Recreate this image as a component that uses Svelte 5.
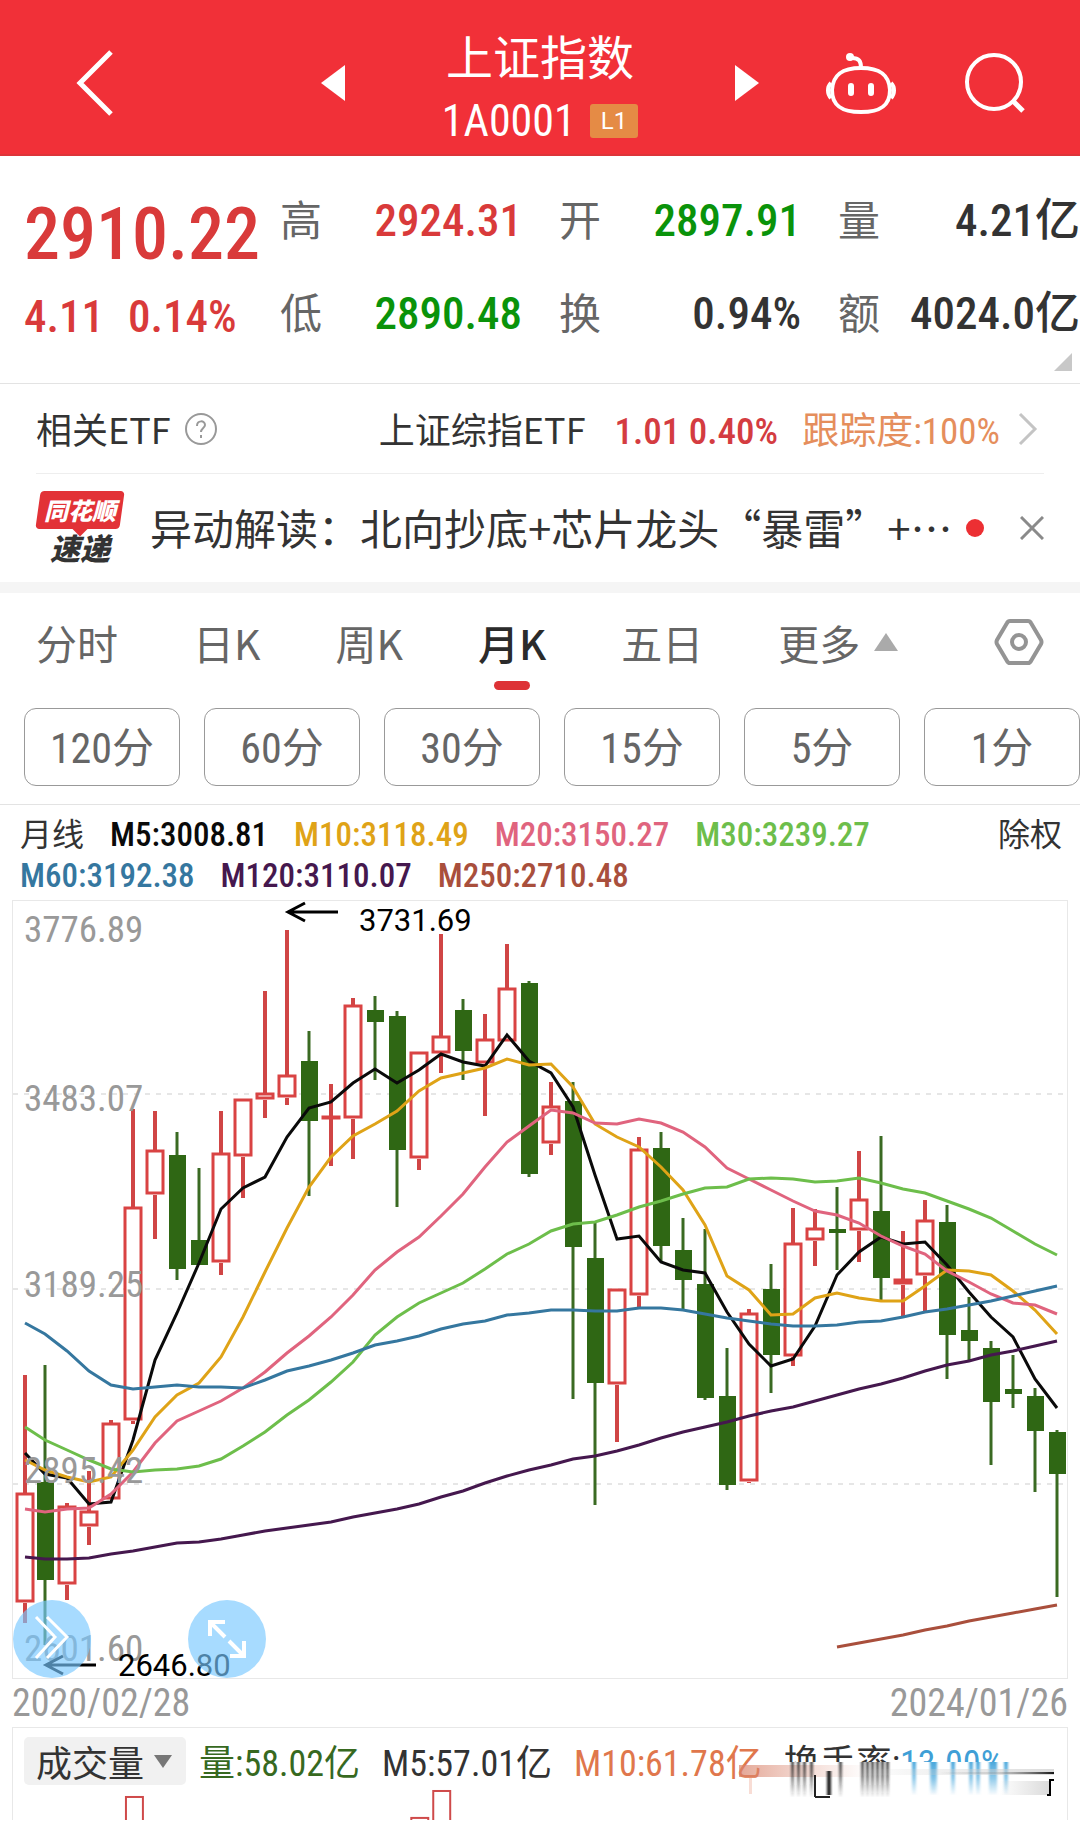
<script lang="ts">
    type Candle = [high: number, top: number, bottom: number, low: number, up: 0 | 1]

    const quotes = [
        { label: '高', value: '2924.31', tone: 'up' },
        { label: '开', value: '2897.91', tone: 'down' },
        { label: '量', value: '4.21亿', tone: '' },
        { label: '低', value: '2890.48', tone: 'down' },
        { label: '换', value: '0.94%', tone: '' },
        { label: '额', value: '4024.0亿', tone: '' }
    ]

    const tabs = ['分时', '日K', '周K', '月K', '五日']
    const periods = ['120分', '60分', '30分', '15分', '5分', '1分']
    let activeTab = $state('月K')
    let indicator = $state('成交量')

    const averages = [
        {
            name: 'M5',
            value: '3008.81',
            color: '#0a0a0a',
            start: 0,
            points: [
                1453, 1474, 1478, 1504, 1502, 1440, 1360, 1313, 1263, 1209, 1188, 1177, 1137, 1108,
                1102, 1083, 1069, 1083, 1070, 1054, 1062, 1066, 1035, 1061, 1073, 1107, 1175, 1239,
                1236, 1262, 1270, 1273, 1312, 1344, 1366, 1359, 1326, 1275, 1252, 1237, 1244, 1242,
                1265, 1292, 1317, 1337, 1379, 1408
            ]
        },
        {
            name: 'M10',
            value: '3118.49',
            color: '#dfa317',
            start: 0,
            points: [
                1460, 1470, 1477, 1482, 1477, 1450, 1417, 1395, 1383, 1357, 1317, 1272, 1228, 1187,
                1157, 1136, 1124, 1111, 1091, 1078, 1073, 1068, 1059, 1065, 1064, 1087, 1124, 1137,
                1147, 1167, 1190, 1225, 1276, 1290, 1315, 1314, 1298, 1293, 1298, 1301, 1301, 1286,
                1270, 1271, 1275, 1291, 1310, 1334
            ]
        },
        {
            name: 'M20',
            value: '3150.27',
            color: '#e0647e',
            start: 0,
            points: [
                1509, 1512, 1509, 1508, 1494, 1472, 1443, 1421, 1411, 1401, 1388, 1372, 1353, 1336,
                1317, 1295, 1270, 1252, 1237, 1216, 1194, 1167, 1142, 1126, 1110, 1113, 1123, 1124,
                1119, 1123, 1132, 1147, 1168, 1179, 1190, 1201, 1211, 1215, 1223, 1236, 1246, 1254,
                1271, 1282, 1294, 1303, 1305, 1314
            ]
        },
        {
            name: 'M30',
            value: '3239.27',
            color: '#6dbe4b',
            start: 0,
            points: [
                1427, 1440, 1450, 1460, 1469, 1472, 1470, 1469, 1466, 1459, 1446, 1432, 1415, 1400,
                1382, 1362, 1335, 1317, 1303, 1293, 1283, 1269, 1254, 1244, 1231, 1224, 1222, 1215,
                1207, 1201, 1194, 1188, 1187, 1179, 1178, 1179, 1182, 1181, 1178, 1183, 1189, 1193,
                1201, 1209, 1218, 1231, 1244, 1255
            ]
        },
        {
            name: 'M60',
            value: '3192.38',
            color: '#35779f',
            start: 0,
            points: [
                1323, 1334, 1351, 1371, 1385, 1389, 1387, 1385, 1387, 1387, 1388, 1380, 1371, 1366,
                1360, 1353, 1345, 1341, 1336, 1329, 1324, 1321, 1315, 1313, 1310, 1310, 1311, 1311,
                1308, 1308, 1310, 1314, 1318, 1321, 1324, 1326, 1326, 1325, 1322, 1321, 1317, 1312,
                1309, 1305, 1301, 1296, 1291, 1286
            ]
        },
        {
            name: 'M120',
            value: '3110.07',
            color: '#45184e',
            start: 0,
            points: [
                1557, 1559, 1559, 1558, 1554, 1551, 1547, 1543, 1542, 1539, 1535, 1531, 1528, 1525,
                1522, 1517, 1513, 1509, 1504, 1497, 1491, 1483, 1476, 1470, 1465, 1459, 1456, 1451,
                1445, 1438, 1432, 1427, 1422, 1416, 1411, 1407, 1401, 1395, 1389, 1384, 1378, 1371,
                1365, 1361, 1355, 1351, 1346, 1341
            ]
        },
        {
            name: 'M250',
            value: '2710.48',
            color: '#a94f3c',
            start: 37,
            points: [1647, 1643, 1639, 1635, 1630, 1626, 1621, 1617, 1613, 1609, 1605]
        }
    ]

    const candles: Candle[] = [
        [1375, 1493, 1603, 1623, 1],
        [1365, 1482, 1580, 1645, 0],
        [1503, 1506, 1585, 1600, 1],
        [1471, 1511, 1527, 1545, 1],
        [1420, 1423, 1500, 1500, 1],
        [1109, 1207, 1421, 1424, 1],
        [1111, 1150, 1195, 1239, 1],
        [1132, 1155, 1269, 1280, 0],
        [1168, 1240, 1265, 1265, 0],
        [1111, 1153, 1263, 1275, 1],
        [1099, 1099, 1157, 1198, 1],
        [991, 1093, 1100, 1118, 1],
        [930, 1075, 1098, 1105, 1],
        [1031, 1061, 1121, 1196, 0],
        [1084, 1116, 1119, 1166, 1],
        [998, 1005, 1119, 1159, 1],
        [996, 1010, 1022, 1080, 0],
        [1011, 1016, 1150, 1207, 0],
        [1052, 1052, 1159, 1170, 1],
        [934, 1036, 1054, 1073, 1],
        [999, 1010, 1051, 1080, 0],
        [1014, 1039, 1064, 1116, 1],
        [944, 988, 1042, 1042, 1],
        [981, 983, 1174, 1177, 0],
        [1082, 1106, 1144, 1155, 1],
        [1082, 1101, 1247, 1399, 0],
        [1223, 1258, 1383, 1505, 0],
        [1289, 1289, 1385, 1442, 1],
        [1137, 1149, 1296, 1307, 1],
        [1132, 1148, 1246, 1262, 0],
        [1218, 1250, 1280, 1309, 0],
        [1229, 1284, 1398, 1400, 0],
        [1348, 1396, 1485, 1490, 0],
        [1309, 1313, 1482, 1483, 1],
        [1264, 1289, 1355, 1393, 0],
        [1208, 1243, 1357, 1366, 1],
        [1209, 1228, 1241, 1266, 1],
        [1187, 1229, 1233, 1270, 0],
        [1151, 1199, 1231, 1262, 1],
        [1136, 1211, 1278, 1300, 0],
        [1231, 1279, 1285, 1317, 1],
        [1200, 1220, 1276, 1313, 1],
        [1205, 1222, 1335, 1379, 0],
        [1297, 1330, 1341, 1360, 0],
        [1341, 1348, 1402, 1465, 0],
        [1355, 1389, 1394, 1408, 0],
        [1388, 1396, 1431, 1492, 0],
        [1430, 1432, 1474, 1597, 0]
    ]

    const gridLines = [1094, 1289, 1484]
    const prices = [
        { y: 942, text: '3776.89' },
        { y: 1111, text: '3483.07' },
        { y: 1297, text: '3189.25' },
        { y: 1483, text: '2895.42' },
        { y: 1661, text: '2601.60' }
    ]

    const xOf = (i: number) => (i === 0 ? 25 : 23 + 22 * i)
    const toPoints = (points: number[], start: number) =>
        points.map((y, i) => `${xOf(i + start)},${y}`).join(' ')
</script>

<header class="topbar">
    <button class="icon-btn back" aria-label="返回">
        <svg width="40" height="68" viewBox="0 0 40 68">
            <path d="M36 3 5 34l31 31" fill="none" stroke="#fff" stroke-width="5" />
        </svg>
    </button>
    <div class="switcher">
        <button class="icon-btn" aria-label="上一个">
            <svg width="24" height="36" viewBox="0 0 24 36"><path d="M24 0v36L0 18z" fill="#fff" /></svg>
        </button>
        <div class="heading">
            <h1>上证指数</h1>
            <div class="code"><span>1A0001</span><span class="level">L1</span></div>
        </div>
        <button class="icon-btn" aria-label="下一个">
            <svg width="24" height="36" viewBox="0 0 24 36"><path d="M0 0v36l24-18z" fill="#fff" /></svg>
        </button>
    </div>
    <div class="actions">
        <button class="icon-btn" aria-label="智能助手">
            <svg width="70" height="64" viewBox="0 0 70 64" fill="none" stroke="#fff" stroke-width="4">
                <path d="M35 17c0-7-2-10-9-10" stroke-linecap="round" />
                <circle cx="24" cy="6" r="4" fill="#fff" stroke="none" />
                <path
                    d="M35 17c18 0 28 6 29 22 0 16-10 22-29 22S6 55 6 39c1-16 11-22 29-22z"
                />
                <path d="M5 32c-4 4-4 11 0 15M65 32c4 4 4 11 0 15" />
                <path d="M25 35v7M45 35v7" stroke-width="6" stroke-linecap="round" />
            </svg>
        </button>
        <button class="icon-btn" aria-label="搜索">
            <svg width="62" height="64" viewBox="0 0 62 64" fill="none" stroke="#fff" stroke-width="4">
                <circle cx="30" cy="31" r="27" />
                <path d="m49 50 10 10" stroke-width="5" />
            </svg>
        </button>
    </div>
</header>

<main>
    <section class="quote">
        <div class="latest">
            <strong>2910.22</strong>
            <div class="change"><span>4.11</span><span>0.14%</span></div>
        </div>
        <dl class="stats">
            {#each quotes as quote (quote.label)}
                <div class="stat">
                    <dt>{quote.label}</dt>
                    <dd class={quote.tone}>{quote.value}</dd>
                </div>
            {/each}
        </dl>
        <svg class="corner" width="18" height="18" viewBox="0 0 18 18">
            <path d="M18 0v18H0z" fill="#c8c8c8" />
        </svg>
    </section>

    <a class="etf" href="#etf">
        <span>相关ETF</span>
        <svg class="help" width="32" height="32" viewBox="0 0 32 32" fill="none" stroke="#999" stroke-width="2">
            <circle cx="16" cy="16" r="15" />
            <path d="M12 13c0-6 8-6 8-1 0 3-4 3-4 7" />
            <path d="M16 22v3" />
        </svg>
        <span class="etf-name">上证综指ETF</span>
        <span class="etf-price">1.01 0.40%</span>
        <span class="etf-track">跟踪度:100%</span>
        <svg width="20" height="34" viewBox="0 0 20 34">
            <path d="m2 2 15 15L2 32" fill="none" stroke="#c4c4c4" stroke-width="3" />
        </svg>
    </a>

    <section class="news">
        <div class="brand">
            <span class="brand-top">同花顺</span>
            <span class="brand-bottom">速递</span>
        </div>
        <a class="news-title" href="#news">异动解读：北向抄底+芯片龙头“暴雷”+⋯</a>
        <span class="dot"></span>
        <button class="icon-btn" aria-label="关闭">
            <svg width="24" height="24" viewBox="0 0 24 24">
                <path d="m1 1 22 22M23 1 1 23" stroke="#8a8a8a" stroke-width="3" />
            </svg>
        </button>
    </section>

    <nav class="tabs">
        {#each tabs as tab (tab)}
            <button class="tab" class:active={tab === activeTab} onclick={() => (activeTab = tab)}>
                {tab}
            </button>
        {/each}
        <button class="tab more">
            更多
            <svg width="24" height="18" viewBox="0 0 24 18"><path d="M12 0l12 18H0z" fill="#aaa" /></svg>
        </button>
        <button class="icon-btn settings" aria-label="设置">
            <svg width="50" height="46" viewBox="0 0 50 46" fill="none" stroke="#949494" stroke-width="4">
                <path
                    d="M16 2h18q2 0 3 2l10 17q1 2 0 4L37 42q-1 2-3 2H16q-2 0-3-2L3 25q-1-2 0-4L13 4q1-2 3-2z"
                />
                <circle cx="25" cy="23" r="7" />
            </svg>
        </button>
    </nav>

    <div class="periods">
        {#each periods as period (period)}
            <button>{period}</button>
        {/each}
    </div>

    <div class="legend">
        <div class="legend-items">
            <span class="kind">月线</span>
            {#each averages as { name, value, color } (name)}
                <span style:color>{name}:{value}</span>
            {/each}
        </div>
        <button class="rights">除权</button>
    </div>

    <section class="chart">
        <svg class="kline" viewBox="13 901 1054 777">
            {#each gridLines as y (y)}
                <line x1="13" x2="1067" y1={y} y2={y} stroke="#e6e6e6" stroke-width="2" stroke-dasharray="5 6" />
            {/each}
            {#each candles as [high, top, bottom, low, up], i (i)}
                {@const x = xOf(i)}
                {#if up}
                    <path d="M{x} {high}V{top}M{x} {bottom}V{low}" stroke="#d04545" stroke-width="4" />
                    <rect
                        x={x - 8}
                        y={top + 1}
                        width="16"
                        height={Math.max(1, bottom - top - 3)}
                        fill="#fff"
                        stroke="#d94343"
                        stroke-width="3"
                    />
                {:else}
                    <path d="M{x} {high}V{low}" stroke="#3a6a22" stroke-width="3" />
                    <rect x={x - 8} y={top} width="17" height={bottom - top} fill="#2f6714" />
                {/if}
            {/each}
            {#each averages as { name, color, points, start } (name)}
                <polyline points={toPoints(points, start)} fill="none" stroke={color} stroke-width="3" />
            {/each}
            <g class="price">
                {#each prices as { y, text } (y)}
                    <text x="24" {y}>{text}</text>
                {/each}
            </g>
            <g fill="none" stroke="#000" stroke-width="3">
                <path d="M338 912H288M305 903l-17 9 17 9" />
                <path d="M96 1665H46M63 1656l-17 9 17 9" />
            </g>
            <g class="extreme">
                <text x="359" y="931">3731.69</text>
                <text x="118" y="1676">2646.80</text>
            </g>
        </svg>
        <button class="float collapse" aria-label="收起">
            <svg viewBox="0 0 78 78" fill="none" stroke="#fff" stroke-width="3">
                <path d="m23 17 19 20-19 21M34 17l20 20-20 21" />
            </svg>
        </button>
        <button class="float expand" aria-label="全屏">
            <svg viewBox="0 0 78 78" fill="none" stroke="#fff" stroke-width="4">
                <path d="M22 36V22h15M22 22l15 15M41 41l15 15M56 41v15H42" />
            </svg>
        </button>
    </section>

    <div class="dates"><span>2020/02/28</span><span>2024/01/26</span></div>

    <section class="volume">
        <div class="volume-head">
            <label class="picker">
                <select bind:value={indicator} aria-label="指标">
                    <option>成交量</option>
                    <option>MACD</option>
                </select>
                <svg width="18" height="13" viewBox="0 0 18 13"><path d="M0 0h18L9 13z" fill="#777" /></svg>
            </label>
            <div class="readout">
                <span class="vol">量:58.02亿</span>
                <span>M5:57.01亿</span>
                <span class="m10">M10:61.78亿</span>
                <span>换手率:<i>13.00%</i></span>
            </div>
            <svg class="smear" viewBox="738 1763 320 38" preserveAspectRatio="none">
                <defs>
                    <linearGradient id="ink" x2="0" y2="1">
                        <stop stop-color="#222" stop-opacity="0.8" />
                        <stop offset="0.4" stop-color="#222" stop-opacity="0.6" />
                        <stop offset="1" stop-color="#222" stop-opacity="0.02" />
                    </linearGradient>
                    <linearGradient id="sky" x2="0" y2="1">
                        <stop stop-color="#4aa8dc" />
                        <stop offset="0.5" stop-color="#4aa8dc" stop-opacity="0.6" />
                        <stop offset="1" stop-color="#4aa8dc" stop-opacity="0.02" />
                    </linearGradient>
                    <linearGradient id="blush">
                        <stop stop-color="#d9826a" stop-opacity="0.7" />
                        <stop offset="1" stop-color="#e0a090" stop-opacity="0" />
                    </linearGradient>
                    <linearGradient id="edge">
                        <stop stop-color="#000" stop-opacity="0" />
                        <stop offset="0.5" stop-color="#777" stop-opacity="0.2" />
                        <stop offset="1" stop-color="#000" stop-opacity="0.9" />
                    </linearGradient>
                    <linearGradient id="haze">
                        <stop stop-color="#ccc" stop-opacity="0" />
                        <stop offset="1" stop-color="#ccc" stop-opacity="0.7" />
                    </linearGradient>
                    <filter id="soft"><feGaussianBlur stdDeviation="1 0" /></filter>
                </defs>
                <path d="M770 1763h288v38H738v-22h32z" fill="#fff" />
                <rect x="740" y="1766" width="130" height="12" fill="url(#blush)" />
                <rect x="750" y="1779" width="3" height="16" fill="#f8ddd5" />
                <g filter="url(#soft)">
                    {#each [792, 798, 804, 811, 840, 862, 867, 872, 877, 882, 887] as x (x)}
                        <rect {x} y="1763" width="3" height="35" fill="url(#ink)" />
                    {/each}
                    {#each [913, 931, 934, 952, 970, 977, 990, 994, 1005] as x (x)}
                        <rect {x} y="1763" width="4" height="33" fill="url(#sky)" />
                    {/each}
                    <path d="M830 1772v24" stroke="#222" stroke-width="4" />
                </g>
                <path d="M816 1776v22M816 1798h15" stroke="#222" stroke-width="2" />
                <rect x="860" y="1770" width="195" height="6" fill="url(#haze)" />
                <rect x="940" y="1773" width="115" height="2" fill="url(#edge)" />
                <rect x="1000" y="1782" width="50" height="14" fill="url(#haze)" />
                <path d="M1055 1781h-4v15h-3" fill="none" stroke="#000" stroke-width="2" />
            </svg>
        </div>
        <svg class="bars" viewBox="12 1787 1056 34" fill="#fff" stroke="#cf4a4a" stroke-width="2">
            <rect x="125" y="1798" width="17" height="40" />
            <rect x="411" y="1819" width="17" height="20" />
            <rect x="433" y="1792" width="17" height="40" />
        </svg>
    </section>
</main>

<style>
    :global(body) {
        background: #fff;
        color: #333;
        font-family: 'Noto Sans CJK SC', sans-serif;
    }

    h1,
    dl,
    dt,
    dd {
        margin: 0;
        font-weight: 400;
    }

    button {
        padding: 0;
        border: 0;
        background: none;
        color: inherit;
        font: inherit;
        cursor: pointer;
    }

    a {
        color: inherit;
        text-decoration: none;
    }

    svg {
        display: block;
        flex-shrink: 0;
    }

    .topbar {
        display: grid;
        grid-template-columns: 1fr auto 1fr;
        align-items: center;
        box-sizing: border-box;
        height: 156px;
        padding: 12px 54px 0;
        border-bottom: 2px solid #dd3439;
        background: #f13038;
        color: #fff;
    }

    .back {
        justify-self: start;
        margin-left: 21px;
    }

    .switcher {
        display: flex;
        align-items: center;
        justify-content: space-between;
        width: 438px;
    }

    .heading {
        padding-top: 6px;
        text-align: center;
    }

    h1 {
        font-size: 47px;
        line-height: 70px;
    }

    .code {
        display: flex;
        align-items: center;
        justify-content: center;
        gap: 14px;
        font-family: 'Roboto Condensed', 'Roboto', sans-serif;
        font-size: 44px;
        line-height: 62px;
    }

    .level {
        padding: 0 11px;
        border-radius: 3px;
        background: #e58b45;
        font-family: 'Roboto', sans-serif;
        font-size: 24px;
        line-height: 34px;
    }

    .actions {
        display: flex;
        justify-content: flex-end;
        gap: 68px;
    }

    .quote {
        position: relative;
        display: flex;
        height: 227px;
        border-bottom: 1px solid #e3e3e3;
        font-family: 'Roboto Condensed', 'Roboto', 'Noto Sans CJK SC', sans-serif;
    }

    .latest {
        width: 256px;
        padding: 34px 0 0 24px;
        color: #d93a3a;
        font-weight: 500;
    }

    .latest strong {
        display: block;
        font-size: 72px;
        font-weight: 500;
        line-height: 90px;
    }

    .change {
        display: flex;
        gap: 24px;
        font-size: 45px;
        line-height: 73px;
    }

    .stats {
        display: grid;
        flex: 1;
        grid-template-columns: repeat(3, 1fr);
        grid-auto-rows: 93px;
        column-gap: 37px;
        padding-top: 15px;
    }

    .stat {
        display: flex;
        align-items: baseline;
        justify-content: space-between;
        line-height: 93px;
    }

    dt {
        color: #666;
        font-family: 'Noto Sans CJK SC', sans-serif;
        font-size: 42px;
    }

    dd {
        font-size: 45px;
        font-weight: 500;
        white-space: nowrap;
    }

    .up {
        color: #d93a3a;
    }

    .down {
        color: #0a930a;
    }

    .corner {
        position: absolute;
        right: 8px;
        bottom: 12px;
    }

    .etf {
        display: flex;
        align-items: baseline;
        height: 89px;
        margin: 0 36px;
        padding-right: 6px;
        border-bottom: 1px solid #eee;
        font-size: 36px;
        line-height: 88px;
    }

    .etf svg {
        align-self: center;
    }

    .help {
        margin-left: 14px;
    }

    .etf-name {
        margin-left: auto;
    }

    .etf-price {
        margin-left: 29px;
        color: #d43c41;
        font-family: 'Roboto Condensed', 'Roboto', sans-serif;
        font-size: 37px;
        font-weight: 500;
    }

    .etf-track {
        margin: 0 18px 0 24px;
        color: #e58e5c;
        font-family: 'Roboto Condensed', 'Roboto', 'Noto Sans CJK SC', sans-serif;
        font-size: 37px;
    }

    .news {
        display: flex;
        align-items: center;
        height: 108px;
        padding: 0 36px;
        border-bottom: 11px solid #f5f5f5;
    }

    .brand {
        width: 88px;
        margin-right: 26px;
        font-style: italic;
        font-weight: 900;
        text-align: center;
    }

    .brand-top {
        position: relative;
        z-index: 0;
        display: block;
        color: #fff;
        font-size: 24px;
        line-height: 38px;
    }

    .brand-top::before,
    .brand-top::after {
        position: absolute;
        z-index: -1;
        background: #e23237;
        content: '';
    }

    .brand-top::before {
        inset: 0 2px;
        border-radius: 4px;
        transform: skewX(-8deg);
    }

    .brand-top::after {
        bottom: -5px;
        left: 50%;
        width: 12px;
        height: 12px;
        margin-left: -6px;
        transform: rotate(45deg);
    }

    .brand-bottom {
        display: block;
        font-size: 30px;
        line-height: 36px;
    }

    .news-title {
        flex: 1;
        overflow: hidden;
        font-size: 42px;
        line-height: 60px;
        padding-bottom: 3px;
        white-space: nowrap;
    }

    .dot {
        width: 18px;
        height: 18px;
        margin-right: 36px;
        border-radius: 50%;
        background: #ec2f33;
    }

    .tabs {
        display: flex;
        align-items: center;
        gap: 75px;
        height: 98px;
        padding: 0 36px;
        color: #666;
        font-size: 41px;
    }

    .tab {
        position: relative;
        line-height: 98px;
    }

    .active {
        color: #2b2b2b;
        font-weight: 500;
    }

    .active::after {
        position: absolute;
        bottom: 1px;
        left: 50%;
        width: 36px;
        height: 9px;
        margin-left: -18px;
        border-radius: 5px;
        background: #dd3236;
        content: '';
    }

    .more {
        display: flex;
        align-items: center;
        gap: 14px;
    }

    .settings {
        margin-left: auto;
    }

    .periods {
        display: grid;
        grid-template-columns: repeat(6, 1fr);
        gap: 24px;
        padding: 17px 0 18px 24px;
        border-bottom: 1px solid #e3e3e3;
    }

    .periods button {
        height: 78px;
        padding-top: 4px;
        border: 1px solid #999;
        border-radius: 12px;
        color: #666;
        font-family: 'Roboto Condensed', 'Roboto', 'Noto Sans CJK SC', sans-serif;
        font-size: 42px;
        line-height: 72px;
    }

    .legend {
        display: flex;
        align-items: flex-start;
        justify-content: space-between;
        padding: 7px 18px 4px 20px;
        font-size: 32px;
        line-height: 41px;
    }

    .legend-items {
        display: flex;
        flex: 1;
        flex-wrap: wrap;
        align-items: baseline;
        column-gap: 26px;
        font-family: 'Roboto Condensed', 'Roboto', sans-serif;
        font-size: 33px;
        font-weight: 500;
    }

    .kind {
        font-family: 'Noto Sans CJK SC', sans-serif;
        font-size: 32px;
        font-weight: 400;
    }

    .chart {
        position: relative;
        margin: 0 12px;
        border: 1px solid #e8e8e8;
    }

    .kline {
        width: 100%;
    }

    .price {
        fill: #999;
        font-family: 'Roboto Condensed', 'Roboto', sans-serif;
        font-size: 37px;
    }

    .extreme {
        fill: #000;
        font-family: 'Roboto', sans-serif;
        font-size: 31px;
    }

    .float {
        position: absolute;
        bottom: 0;
        width: 78px;
        height: 78px;
        border-radius: 50%;
        background: rgba(120, 200, 255, 0.65);
    }

    .collapse {
        left: 0;
    }

    .expand {
        left: 175px;
    }

    .dates {
        display: flex;
        justify-content: space-between;
        padding: 0 12px;
        color: #999;
        font-family: 'Roboto Condensed', 'Roboto', sans-serif;
        font-size: 38px;
        line-height: 48px;
    }

    .volume {
        margin: 0 12px;
        border: 1px solid #e8e8e8;
        border-bottom: 0;
    }

    .volume-head {
        position: relative;
        display: flex;
        align-items: center;
        height: 58px;
        padding: 8px 0 0 11px;
        box-sizing: border-box;
        white-space: nowrap;
    }

    .picker {
        display: flex;
        align-items: center;
        gap: 10px;
        height: 48px;
        padding: 0 14px 0 12px;
        border-radius: 5px;
        background: #f1f1f1;
    }

    .readout {
        display: flex;
        gap: 22px;
        padding-top: 6px;
        margin-left: 13px;
        font-family: 'Roboto Condensed', 'Roboto', 'Noto Sans CJK SC', sans-serif;
        font-size: 36px;
        line-height: 48px;
    }

    select {
        width: 108px;
        padding: 0;
        border: 0;
        appearance: none;
        background: none;
        color: #333;
        font-family: 'Noto Sans CJK SC', sans-serif;
        font-size: 36px;
    }

    .vol {
        color: #37691f;
    }

    .m10 {
        color: #e0774c;
    }

    i {
        color: #3f9fd6;
        font-style: normal;
    }

    .smear {
        position: absolute;
        top: 34px;
        right: 10px;
        width: 320px;
        height: 38px;
    }

    .bars {
        width: 100%;
    }
</style>
